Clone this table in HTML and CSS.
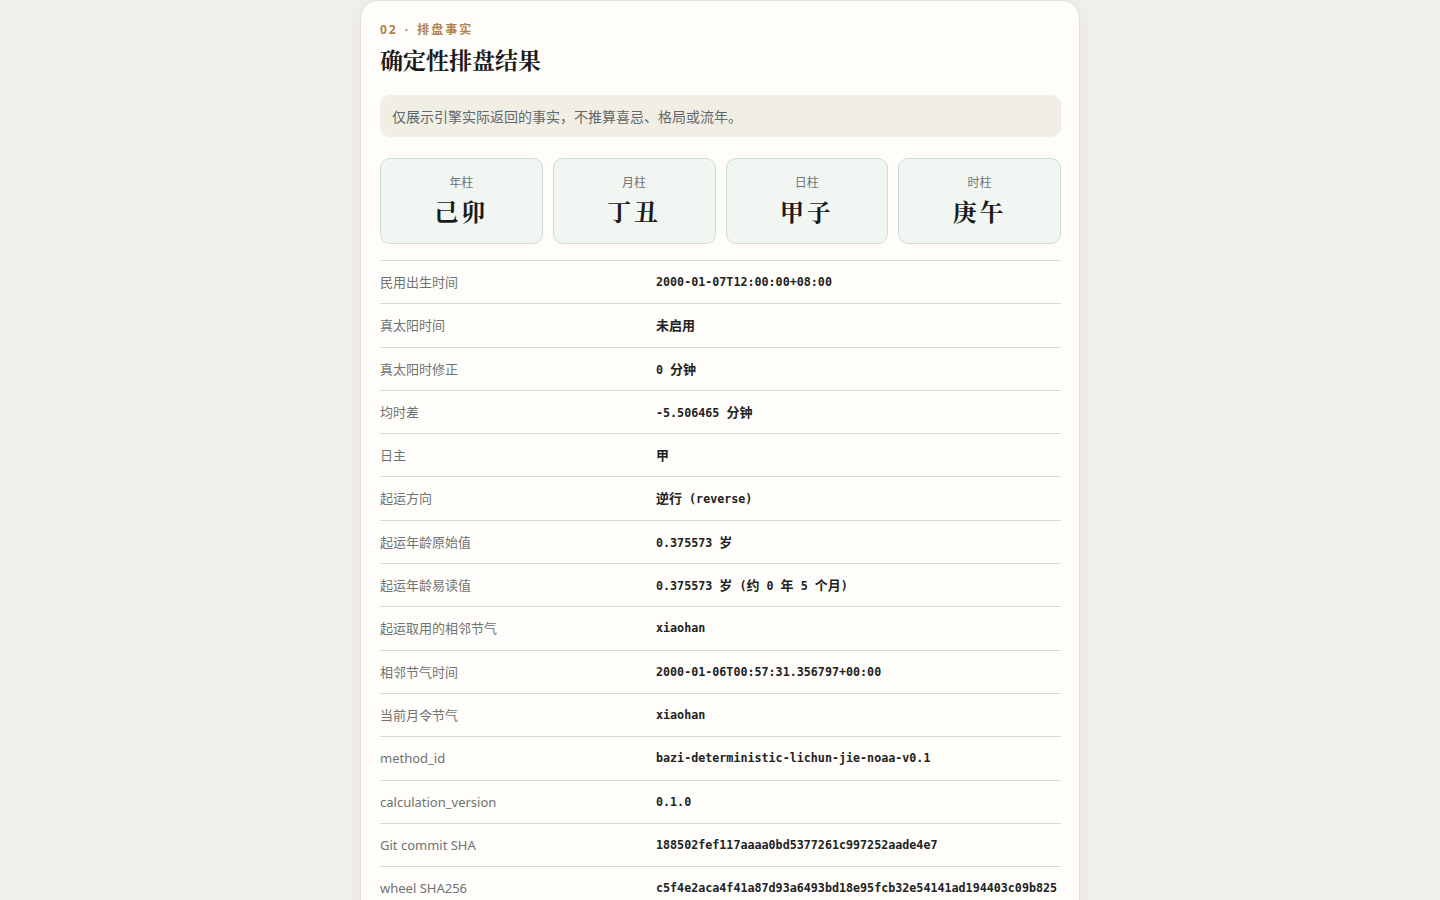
FILE: index.html
```html
<!DOCTYPE html>
<html lang="zh-CN">
<head>
<meta charset="utf-8">
<title>确定性排盘结果</title>
<link rel="stylesheet" href="styles.css">
</head>
<body>
<main class="card">
  <div class="eyebrow">02 <span class="dot">·</span> 排盘事实</div>
  <h1 class="title">确定性排盘结果</h1>
  <p class="notice">仅展示引擎实际返回的事实，不推算喜忌、格局或流年。</p>
  <section class="pillars">
    <div class="pillar"><div class="p-label">年柱</div><div class="p-value">己卯</div></div>
    <div class="pillar"><div class="p-label">月柱</div><div class="p-value">丁丑</div></div>
    <div class="pillar"><div class="p-label">日柱</div><div class="p-value">甲子</div></div>
    <div class="pillar"><div class="p-label">时柱</div><div class="p-value">庚午</div></div>
  </section>
  <dl class="facts">
    <div class="row"><dt>民用出生时间</dt><dd>2000-01-07T12:00:00+08:00</dd></div>
    <div class="row"><dt>真太阳时间</dt><dd><span class="cjk">未启用</span></dd></div>
    <div class="row"><dt>真太阳时修正</dt><dd>0 <span class="cjk">分钟</span></dd></div>
    <div class="row"><dt>均时差</dt><dd>-5.506465 <span class="cjk">分钟</span></dd></div>
    <div class="row"><dt>日主</dt><dd><span class="cjk">甲</span></dd></div>
    <div class="row"><dt>起运方向</dt><dd><span class="cjk">逆行</span> (reverse)</dd></div>
    <div class="row"><dt>起运年龄原始值</dt><dd>0.375573 <span class="cjk">岁</span></dd></div>
    <div class="row"><dt>起运年龄易读值</dt><dd>0.375573 <span class="cjk">岁</span> (<span class="cjk">约</span> 0 <span class="cjk">年</span> 5 <span class="cjk">个月</span>)</dd></div>
    <div class="row"><dt>起运取用的相邻节气</dt><dd>xiaohan</dd></div>
    <div class="row"><dt>相邻节气时间</dt><dd>2000-01-06T00:57:31.356797+00:00</dd></div>
    <div class="row"><dt>当前月令节气</dt><dd>xiaohan</dd></div>
    <div class="row"><dt>method_id</dt><dd>bazi-deterministic-lichun-jie-noaa-v0.1</dd></div>
    <div class="row"><dt>calculation_version</dt><dd>0.1.0</dd></div>
    <div class="row"><dt>Git commit SHA</dt><dd>188502fef117aaaa0bd5377261c997252aade4e7</dd></div>
    <div class="row"><dt>wheel SHA256</dt><dd>c5f4e2aca4f41a87d93a6493bd18e95fcb32e54141ad194403c09b825f3e1d07a4b8c6e9</dd></div>
  </dl>
</main>
</body>
</html>
```
FILE: styles.css
```css
* { box-sizing: border-box; }
html, body { margin: 0; padding: 0; }
body {
  background: #f1efe9;
  font-family: "Noto Sans", "Noto Sans CJK SC", sans-serif;
  color: #1d1d1d;
}
.card {
  width: 720px;
  margin: 0 auto;
  background: #fefdf9;
  border: 1px solid #e2dfd7;
  border-radius: 18px;
  padding: 20px 18px 24px 19px;
  box-shadow: 0 4px 18px rgba(60, 50, 30, 0.05);
}
.eyebrow {
  font-size: 12px;
  line-height: 18px;
  font-weight: 700;
  letter-spacing: 2px;
  color: #b0834c;
}
.dot {
  display: inline-block;
  margin: 0 2px;
}
.title {
  margin: 4px 0 0;
  font-family: "Noto Serif CJK SC", "Noto Serif CJK", "Liberation Serif", "Noto Sans CJK SC", serif;
  font-size: 23px;
  line-height: 34px;
  font-weight: 700;
  color: #1a1a1a;
}
.notice {
  margin: 18px 0 0;
  background: #f1eee6;
  border-radius: 10px;
  padding: 0 12px;
  height: 42px;
  display: flex;
  align-items: center;
  font-size: 14px;
  color: #5f686a;
}
.pillars {
  margin-top: 21px;
  display: grid;
  grid-template-columns: repeat(4, 1fr);
  gap: 10px;
}
.pillar {
  height: 86px;
  background: #f2f6f3;
  border: 1px solid #cfdcd6;
  border-radius: 10px;
  display: flex;
  flex-direction: column;
  align-items: center;
  padding-top: 15px;
}
.p-label {
  font-size: 12px;
  line-height: 17px;
  color: #6e7373;
}
.p-value {
  margin-top: 5px;
  font-family: "Noto Serif CJK SC", "Noto Serif CJK", "Liberation Serif", "Noto Sans CJK SC", serif;
  font-size: 24px;
  line-height: 30px;
  font-weight: 700;
  letter-spacing: 3px;
  color: #1a1a1a;
}
.facts {
  margin: 16px 0 0;
  border-top: 1px solid #dcd9d2;
}
.row {
  display: grid;
  grid-template-columns: 276px 1fr;
  border-bottom: 1px solid #dcd9d2;
  align-items: start;
  padding: 12px 0 12px;
  height: 43.3px;
}
.row:last-child {
  height: auto;
}
dt {
  font-size: 13px;
  line-height: 19px;
  color: #707373;
}
dd {
  margin: 0;
  font-family: "DejaVu Sans Mono", "Noto Sans CJK SC", monospace;
  font-size: 11.7px;
  line-height: 19px;
  font-weight: 700;
  color: #222222;
  word-break: break-all;
}
.cjk {
  font-family: "Noto Sans CJK SC", sans-serif;
  font-size: 13px;
  line-height: 18px;
}
```
